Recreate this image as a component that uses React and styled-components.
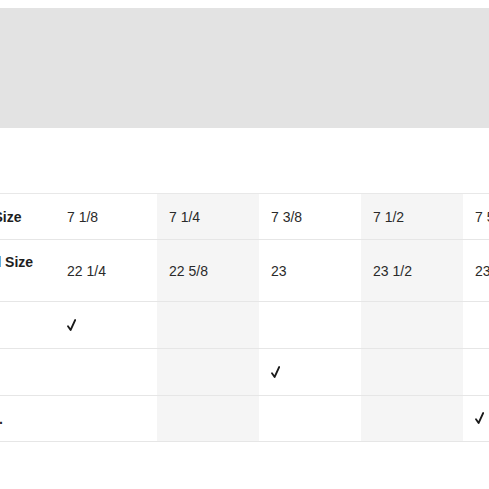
import styled, { createGlobalStyle } from 'styled-components';

const GlobalStyle = createGlobalStyle`
  html, body {
    margin: 0;
    padding: 0;
    background: #fff;
    overflow: hidden;
    font-family: "Liberation Sans", Arial, sans-serif;
  }
`;

const sizes = ['7 1/8', '7 1/4', '7 3/8', '7 1/2', '7 5/8'];
const inches = ['22 1/4', '22 5/8', '23', '23 1/2', '23 7/8'];
const fits = [
    { label: 'S', check: 0 },
    { label: 'M', check: 2 },
    { label: 'XX-L.', check: 4 },
];

function CheckMark() {
    return (
        <CheckIcon viewBox="0 0 9 12" width="9" height="12">
            <path d="M1 7.2 L3.6 11 L8.2 1" fill="none" stroke="#1a1a1a" strokeWidth="1.8" strokeLinecap="round" strokeLinejoin="round" />
        </CheckIcon>
    );
}

function App() {
    return (
        <Page>
            <GlobalStyle />
            <Banner />
            <Wrap>
                <Table>
                    <tbody>
                        <Row $h={46}>
                            <Label>Hat Size</Label>
                            {sizes.map((s, i) => (
                                <Cell key={s} $shaded={i % 2 === 1}>{s}</Cell>
                            ))}
                        </Row>
                        <Row $h={62}>
                            <Label>Head Size<br />(in)</Label>
                            {inches.map((s, i) => (
                                <Cell key={s} $shaded={i % 2 === 1}>{s}</Cell>
                            ))}
                        </Row>
                        {fits.map((f, r) => (
                            <Row key={f.label} $h={r === 2 ? 46 : 47}>
                                <Label>{f.label}</Label>
                                {sizes.map((s, i) => (
                                    <Cell key={s} $shaded={i % 2 === 1}>
                                        {i === f.check && <CheckMark />}
                                    </Cell>
                                ))}
                            </Row>
                        ))}
                    </tbody>
                </Table>
            </Wrap>
        </Page>
    );
}

export default App;

const Page = styled.div`
width: 489px;
height: 489px;
overflow: hidden;
background: #fff;
`

const Banner = styled.div`
margin-top: 8px;
height: 120px;
background: #e3e3e3;
`

const Wrap = styled.div`
margin-top: 65px;
margin-left: -47px;
`

const Table = styled.table`
border-collapse: collapse;
table-layout: fixed;
width: 612px;
border-top: 1px solid #e8e8e8;
`

const Row = styled.tr`
height: ${(p) => p.$h}px;
border-bottom: 1px solid #e6e6e6;
`

const Label = styled.th`
box-sizing: border-box;
width: 102px;
padding: 0 10px 0 14px;
text-align: left;
font-size: 14px;
font-weight: bold;
color: #1e1e1e;
line-height: 18px;
white-space: nowrap;
vertical-align: middle;
`

const Cell = styled.td`
box-sizing: border-box;
width: 102px;
padding: 0 12px;
font-size: 14px;
color: #2a2a2a;
vertical-align: middle;
background: ${(p) => (p.$shaded ? '#f5f5f5' : '#fff')};
`

const CheckIcon = styled.svg`
display: block;
margin-top: -1px;
`
